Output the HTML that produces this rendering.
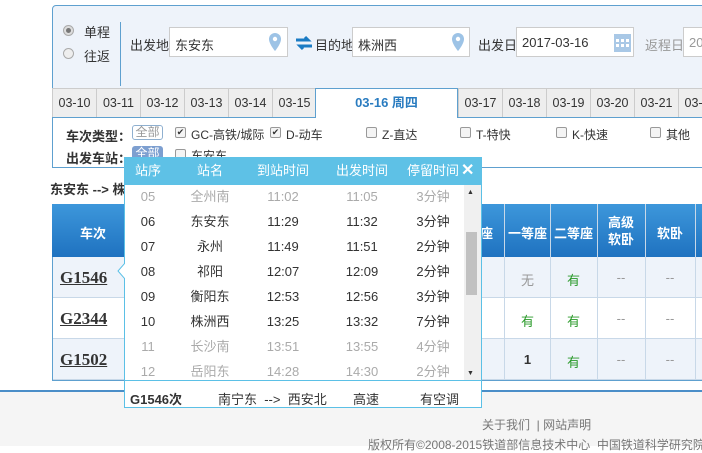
<!DOCTYPE html>
<html><head><meta charset="utf-8"><style>
*{box-sizing:border-box;margin:0;padding:0}
body{width:702px;height:446px;overflow:hidden;background:#fff;font-family:"Liberation Sans","Noto Sans CJK SC",sans-serif;font-size:12px;color:#333;position:relative}
.a{position:absolute}
.inp{position:absolute;top:27px;height:30px;background:#fff;border:1px solid #ccc;padding:7px 5px;font-size:13px}
.tab{position:absolute;top:88px;height:30px;width:44px;background:#eee;border:1px solid #ccc;border-right:none;text-align:center;line-height:28px;font-size:12.5px;color:#333}
.cb{position:absolute;width:11px;height:11px;border:1px solid #999;border-radius:2px;background:#f4f4f4;font-size:9px;line-height:9px;text-align:center}
.hd{position:absolute;color:#fff;font-weight:bold;font-size:13px;text-align:center}
.row{position:absolute;left:52px;width:650px;height:41px;border-bottom:1px solid #c8d8e8}
.tr{position:absolute;font:bold 17px "Liberation Serif",serif;text-decoration:underline;color:#333;left:60px}
.c{position:absolute;text-align:center;font-size:13px}
.pr{position:absolute;left:124px;width:340px;height:25px;line-height:25px;font-size:13px;color:#333}
.pr span{position:absolute;text-align:center;width:60px}
.g{color:#aaa!important}
</style></head><body>
<div class="a" style="left:52px;top:5px;width:660px;height:98px;background:#eef3fa;border:1px solid #5ea0cf;border-radius:4px"></div>
<div class="a" style="left:63px;top:25px;width:11px;height:11px;border-radius:50%;border:1px solid #aaa;background:#ddd"><div style="margin:2px;width:5px;height:5px;border-radius:50%;background:#777"></div></div>
<div class="a" style="left:84px;top:22px;font-size:13px">单程</div>
<div class="a" style="left:63px;top:48px;width:11px;height:11px;border-radius:50%;border:1px solid #aaa;background:#eee"></div>
<div class="a" style="left:84px;top:46px;font-size:13px">往返</div>
<div class="a" style="left:120px;top:22px;width:1px;height:64px;background:#5ea0cf"></div>
<div class="a" style="left:130px;top:35px;font-size:13px">出发地</div>
<div class="inp" style="left:169px;width:119px">东安东</div>
<svg class="a" style="left:268px;top:32px" width="14" height="20"><path d="M7 1a6 6 0 0 0-6 6c0 5 6 12 6 12s6-7 6-12a6 6 0 0 0-6-6z" fill="#9dc3e6"/><circle cx="7" cy="7" r="2.2" fill="#fff"/></svg>
<svg class="a" style="left:294px;top:35px" width="20" height="16"><path d="M2 5h12l-3-3M18 11H6l3 3" stroke="#1a7bc4" stroke-width="3" fill="none"/></svg>
<div class="a" style="left:315px;top:35px;font-size:13px">目的地</div>
<div class="inp" style="left:352px;width:118px">株洲西</div>
<svg class="a" style="left:451px;top:32px" width="14" height="20"><path d="M7 1a6 6 0 0 0-6 6c0 5 6 12 6 12s6-7 6-12a6 6 0 0 0-6-6z" fill="#9dc3e6"/><circle cx="7" cy="7" r="2.2" fill="#fff"/></svg>
<div class="a" style="left:478px;top:35px;font-size:13px">出发日</div>
<div class="inp" style="left:516px;width:118px">2017-03-16</div>
<svg class="a" style="left:614px;top:31px" width="17" height="21"><rect x="0" y="3" width="17" height="18" fill="#a9c8e6"/><g fill="#fff"><rect x="2" y="8" width="3" height="3"/><rect x="7" y="8" width="3" height="3"/><rect x="12" y="8" width="3" height="3"/><rect x="2" y="13" width="3" height="3"/><rect x="7" y="13" width="3" height="3"/><rect x="12" y="13" width="3" height="3"/></g></svg>
<div class="a" style="left:645px;top:35px;font-size:13px;color:#999">返程日</div>
<div class="inp" style="left:683px;width:60px;color:#999">2017</div>

<div class="tab" style="left:52px">03-10</div><div class="tab" style="left:96px">03-11</div><div class="tab" style="left:140px">03-12</div><div class="tab" style="left:184px">03-13</div><div class="tab" style="left:228px">03-14</div><div class="tab" style="left:272px">03-15</div>
<div class="a" style="left:315px;top:88px;width:143px;height:30px;background:#fff;border:1px solid #5ea0cf;border-bottom:none;text-align:center;line-height:28px;font-size:13px;font-weight:bold;color:#2a7cc0">03-16 周四</div>
<div class="tab" style="left:458px">03-17</div><div class="tab" style="left:502px">03-18</div><div class="tab" style="left:546px">03-19</div><div class="tab" style="left:590px">03-20</div><div class="tab" style="left:634px">03-21</div><div class="tab" style="left:678px">03-22</div>
<div class="a" style="left:52px;top:117px;width:263px;height:1px;background:#5ea0cf"></div>
<div class="a" style="left:458px;top:117px;width:250px;height:1px;background:#5ea0cf"></div>
<div class="a" style="left:52px;top:117px;width:660px;height:51px;border:1px solid #5ea0cf;border-top:none"></div>
<div class="a" style="left:66px;top:126px;font-weight:bold;font-size:13px">车次类型：</div>
<div class="a" style="left:132px;top:125px;width:31px;height:15px;border:1px solid #8fb0d0;border-radius:3px;color:#999;text-align:center;line-height:13px">全部</div>
<div class="cb" style="left:175px;top:127px">✔</div><div class="a" style="left:191px;top:126px">GC-高铁/城际</div>
<div class="cb" style="left:270px;top:127px">✔</div><div class="a" style="left:286px;top:126px">D-动车</div>
<div class="cb" style="left:366px;top:127px"></div><div class="a" style="left:382px;top:126px">Z-直达</div>
<div class="cb" style="left:460px;top:127px"></div><div class="a" style="left:476px;top:126px">T-特快</div>
<div class="cb" style="left:556px;top:127px"></div><div class="a" style="left:572px;top:126px">K-快速</div>
<div class="cb" style="left:650px;top:127px"></div><div class="a" style="left:666px;top:126px">其他</div>
<div class="a" style="left:66px;top:148px;font-weight:bold;font-size:13px">出发车站：</div>
<div class="a" style="left:132px;top:146px;width:31px;height:15px;background:#7d9fd0;border-radius:3px;color:#fff;text-align:center;line-height:15px">全部</div>
<div class="cb" style="left:175px;top:149px"></div><div class="a" style="left:191px;top:147px">东安东</div>
<div class="a" style="left:50px;top:179px;font-weight:bold;font-size:13px">东安东 --&gt; 株</div>

<div class="a" style="left:52px;top:204px;width:650px;height:53px;background:linear-gradient(#3d97db,#1f72c0)"></div>
<div class="hd" style="left:80px;top:223px">车次</div>
<div class="hd" style="left:480px;top:223px">座</div>
<div class="hd" style="left:505px;top:223px;width:45px">一等座</div>
<div class="hd" style="left:550px;top:223px;width:47px">二等座</div>
<div class="hd" style="left:597px;top:214px;width:48px;line-height:17px">高级<br>软卧</div>
<div class="hd" style="left:645px;top:223px;width:50px">软卧</div>
<div class="row" style="top:257px;background:#eef3fa"></div>
<div class="row" style="top:298px;background:#fff"></div>
<div class="row" style="top:339px;background:#eef3fa"></div>
<div class="a" style="left:52px;top:257px;width:1px;height:124px;background:#5ea0cf"></div>
<div class="a" style="left:504px;top:204px;width:1px;height:176px;background:#c8d8e8"></div>
<div class="a" style="left:550px;top:204px;width:1px;height:176px;background:#c8d8e8"></div>
<div class="a" style="left:597px;top:204px;width:1px;height:176px;background:#c8d8e8"></div>
<div class="a" style="left:645px;top:204px;width:1px;height:176px;background:#c8d8e8"></div>
<div class="a" style="left:695px;top:204px;width:1px;height:176px;background:#c8d8e8"></div>
<div class="tr" style="top:268px">G1546</div><div class="tr" style="top:309px">G2344</div><div class="tr" style="top:350px">G1502</div>
<div class="c" style="left:505px;top:270px;width:45px;color:#999">无</div>
<div class="c" style="left:550px;top:270px;width:47px;color:#2a9a2a">有</div>
<div class="c" style="left:505px;top:311px;width:45px;color:#2a9a2a">有</div>
<div class="c" style="left:550px;top:311px;width:47px;color:#2a9a2a">有</div>
<div class="c" style="left:505px;top:352px;width:45px;font-weight:bold">1</div>
<div class="c" style="left:550px;top:352px;width:47px;color:#2a9a2a">有</div>
<div class="c" style="left:597px;top:270px;width:48px;color:#999">--</div><div class="c" style="left:645px;top:270px;width:50px;color:#999">--</div>
<div class="c" style="left:597px;top:311px;width:48px;color:#999">--</div><div class="c" style="left:645px;top:311px;width:50px;color:#999">--</div>
<div class="c" style="left:597px;top:352px;width:48px;color:#999">--</div><div class="c" style="left:645px;top:352px;width:50px;color:#999">--</div>
<div class="a" style="left:52px;top:380px;width:650px;height:1px;background:#5ea0cf"></div>

<div class="a" style="left:0;top:390px;width:702px;height:56px;background:#f5f5f5;border-top:2px solid #4a8ec8"></div>
<div class="a" style="left:482px;top:416px;color:#777">关于我们 &nbsp;| 网站声明</div>
<div class="a" style="left:368px;top:436px;color:#777;white-space:nowrap">版权所有©2008-2015铁道部信息技术中心 &nbsp;中国铁道科学研究院</div>

<div class="a" style="left:124px;top:157px;width:358px;height:251px;background:#fff;border:1px solid #5bc0e6"></div>
<div class="a" style="left:124px;top:157px;width:358px;height:28px;background:#5ec1e6"></div>
<div class="pr" style="top:158px;color:#fff"><span style="left:-6px">站序</span><span style="left:56px">站名</span><span style="left:129px;width:60px">到站时间</span><span style="left:208px">出发时间</span><span style="left:279px">停留时间</span></div>
<div class="a" style="left:461px;top:160px;color:#fff;font-weight:bold;font-size:16px">✕</div>
<div class="pr g" style="top:184px"><span style="left:-6px">05</span><span style="left:56px">全州南</span><span style="left:129px">11:02</span><span style="left:208px">11:05</span><span style="left:279px">3分钟</span></div>
<div class="pr" style="top:209px"><span style="left:-6px">06</span><span style="left:56px">东安东</span><span style="left:129px">11:29</span><span style="left:208px">11:32</span><span style="left:279px">3分钟</span></div>
<div class="pr" style="top:234px"><span style="left:-6px">07</span><span style="left:56px">永州</span><span style="left:129px">11:49</span><span style="left:208px">11:51</span><span style="left:279px">2分钟</span></div>
<div class="pr" style="top:259px"><span style="left:-6px">08</span><span style="left:56px">祁阳</span><span style="left:129px">12:07</span><span style="left:208px">12:09</span><span style="left:279px">2分钟</span></div>
<div class="pr" style="top:284px"><span style="left:-6px">09</span><span style="left:56px">衡阳东</span><span style="left:129px">12:53</span><span style="left:208px">12:56</span><span style="left:279px">3分钟</span></div>
<div class="pr" style="top:309px"><span style="left:-6px">10</span><span style="left:56px">株洲西</span><span style="left:129px">13:25</span><span style="left:208px">13:32</span><span style="left:279px">7分钟</span></div>
<div class="pr g" style="top:334px"><span style="left:-6px">11</span><span style="left:56px">长沙南</span><span style="left:129px">13:51</span><span style="left:208px">13:55</span><span style="left:279px">4分钟</span></div>
<div class="pr g" style="top:359px"><span style="left:-6px">12</span><span style="left:56px">岳阳东</span><span style="left:129px">14:28</span><span style="left:208px">14:30</span><span style="left:279px">2分钟</span></div>
<div class="a" style="left:464px;top:185px;width:17px;height:195px;background:#f0f0f0"></div>
<div class="a" style="left:467px;top:189px;font-size:7px;color:#333">▲</div>
<div class="a" style="left:467px;top:370px;font-size:7px;color:#333">▼</div>
<div class="a" style="left:466px;top:232px;width:11px;height:63px;background:#c1c1c1"></div>
<div class="a" style="left:124px;top:380px;width:358px;height:1px;background:#5bc0e6"></div>
<div class="a" style="left:130px;top:389px;font-weight:bold;font-size:13px">G1546次</div>
<div class="a" style="left:218px;top:389px;font-size:13px">南宁东 &nbsp;--&gt; &nbsp;西安北</div>
<div class="a" style="left:353px;top:389px;font-size:13px">高速</div>
<div class="a" style="left:420px;top:389px;font-size:13px">有空调</div>
<svg class="a" style="left:117px;top:263px" width="8" height="16"><path d="M8 0L1 8L8 16" fill="#fff" stroke="#5bc0e6"/></svg>
</body></html>
